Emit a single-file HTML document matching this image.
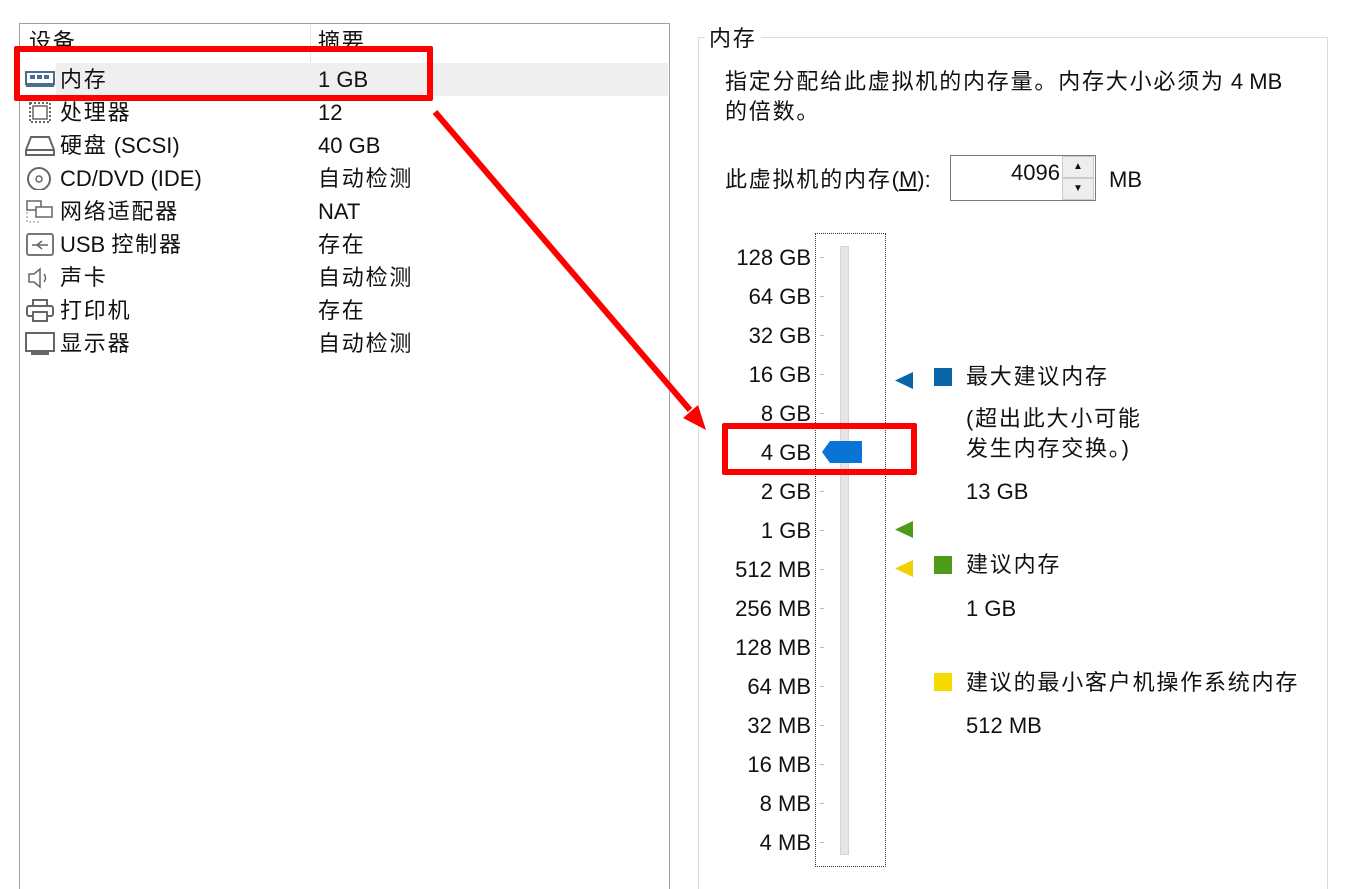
<!DOCTYPE html>
<html style="width:1359px;height:889px;overflow:hidden"><head><meta charset="utf-8"><style>
body{margin:0;width:1359px;height:889px;background:#fff;font-family:"Liberation Sans","Noto Sans CJK SC",sans-serif;font-size:22px;color:#111;position:relative;overflow:hidden}
.a{position:absolute;white-space:nowrap}
.c{letter-spacing:1.8px}
.row{position:absolute;left:20px;width:648px;height:33px;line-height:33px}
.ic{position:absolute;left:5px;top:5px;width:30px;height:23px}
.lab2{position:absolute;left:0;width:811px;text-align:right;line-height:24px}
.tick{position:absolute;left:820px;width:4px;height:1px;background:#bbb}
</style></head><body>
<div class="a" style="left:19px;top:23px;width:649px;height:866px;border:1px solid #a0a0a0;border-bottom:none"></div>
<div class="a" style="left:310px;top:24px;width:1px;height:38px;background:#e5e5e5"></div>
<div class="a c" style="left:29px;top:27px;line-height:30px">设备</div>
<div class="a c" style="left:318px;top:27px;line-height:30px">摘要</div>
<div class="a" style="left:56px;top:63px;width:612px;height:33px;background:#efefef"></div>
<div class="row" style="top:63px"><svg class="ic" viewBox="0 0 30 23"><rect x="1" y="4" width="28" height="12" fill="none" stroke="#4a6f90" stroke-width="2"/><rect x="5" y="7" width="5" height="4" fill="#4a6f90"/><rect x="12" y="7" width="5" height="4" fill="#4a6f90"/><rect x="19" y="7" width="5" height="4" fill="#4a6f90"/><rect x="1" y="16" width="28" height="3" fill="#4a6f90"/></svg><span class="a c" style="left:40px">内存</span><span class="a" style="left:298px">1 GB</span></div>
<div class="row" style="top:96px"><svg class="ic" viewBox="0 0 30 23"><rect x="5" y="2" width="20" height="19" fill="none" stroke="#666" stroke-width="2" stroke-dasharray="2 2"/><rect x="8" y="5" width="14" height="13" fill="none" stroke="#666" stroke-width="1.5"/></svg><span class="a c" style="left:40px">处理器</span><span class="a" style="left:298px">12</span></div>
<div class="row" style="top:129px"><svg class="ic" viewBox="0 0 30 23"><path d="M6 3h18l5 13v5H1v-5z M1 16h28" fill="none" stroke="#666" stroke-width="2"/></svg><span class="a" style="left:40px"><span class="c">硬盘</span> (SCSI)</span><span class="a" style="left:298px">40 GB</span></div>
<div class="row" style="top:162px"><svg class="ic" viewBox="0 0 30 23"><circle cx="14" cy="12" r="11" fill="none" stroke="#666" stroke-width="2"/><circle cx="14" cy="12" r="3" fill="none" stroke="#666" stroke-width="1.5"/></svg><span class="a" style="left:40px">CD/DVD (IDE)</span><span class="a c" style="left:298px">自动检测</span></div>
<div class="row" style="top:195px"><svg class="ic" viewBox="0 0 30 23"><rect x="2" y="1" width="14" height="9" fill="none" stroke="#666" stroke-width="1.5"/><rect x="11" y="7" width="16" height="10" fill="#fff" stroke="#666" stroke-width="1.5"/><path d="M2 12v10h14" stroke="#888" stroke-dasharray="2 2" fill="none"/></svg><span class="a c" style="left:40px">网络适配器</span><span class="a" style="left:298px">NAT</span></div>
<div class="row" style="top:228px"><svg class="ic" viewBox="0 0 30 23"><rect x="2" y="1" width="26" height="21" rx="2" fill="none" stroke="#777" stroke-width="2"/><path d="M7 12h16M12 12l5-4M12 12l5 4" stroke="#666" stroke-width="1.5" fill="none"/></svg><span class="a" style="left:40px">USB <span class="c">控制器</span></span><span class="a c" style="left:298px">存在</span></div>
<div class="row" style="top:261px"><svg class="ic" viewBox="0 0 30 23"><path d="M4 8h5l6-5v18l-6-5H4z" fill="none" stroke="#666" stroke-width="1.5"/><path d="M19 8q3 4 0 8" fill="none" stroke="#666" stroke-width="1.5"/></svg><span class="a c" style="left:40px">声卡</span><span class="a c" style="left:298px">自动检测</span></div>
<div class="row" style="top:294px"><svg class="ic" viewBox="0 0 30 23"><rect x="8" y="1" width="14" height="6" fill="none" stroke="#666" stroke-width="2"/><rect x="2" y="7" width="26" height="10" rx="2" fill="none" stroke="#666" stroke-width="2"/><rect x="8" y="13" width="14" height="9" fill="#fff" stroke="#666" stroke-width="2"/></svg><span class="a c" style="left:40px">打印机</span><span class="a c" style="left:298px">存在</span></div>
<div class="row" style="top:327px"><svg class="ic" viewBox="0 0 30 23"><rect x="1" y="1" width="28" height="18" fill="none" stroke="#666" stroke-width="2"/><rect x="6" y="20" width="18" height="3" fill="#666"/></svg><span class="a c" style="left:40px">显示器</span><span class="a c" style="left:298px">自动检测</span></div>

<div class="a" style="left:698px;top:37px;width:628px;height:852px;border:1px solid #dcdcdc;border-bottom:none"></div>
<div class="a c" style="left:705px;top:25px;background:#fff;padding:0 4px;line-height:28px">内存</div>
<div class="a" style="left:725px;top:67px;line-height:30px"><span class="c">指定分配给此虚拟机的内存量。内存大小必须为</span> 4 MB<br><span class="c">的倍数。</span></div>
<div class="a" style="left:725px;top:165px;line-height:30px"><span class="c">此虚拟机的内存</span>(<u>M</u>):</div>
<div class="a" style="left:950px;top:155px;width:144px;height:44px;border:1px solid #7a7a7a"></div>
<div class="a" style="left:1000px;top:158px;width:60px;text-align:right;line-height:30px">4096</div>
<div class="a" style="left:1062px;top:156px;width:32px;height:22px;background:#eee;border:1px solid #ccc;box-sizing:border-box;text-align:center;font-size:10px;line-height:20px">▲</div>
<div class="a" style="left:1062px;top:178px;width:32px;height:22px;background:#eee;border:1px solid #ccc;box-sizing:border-box;text-align:center;font-size:10px;line-height:20px">▼</div>
<div class="a" style="left:1109px;top:165px;line-height:30px">MB</div>

<div class="a" style="left:815px;top:233px;width:69px;height:632px;border:1px dotted #333"></div>
<div class="a" style="left:840px;top:246px;width:7px;height:607px;background:#e6e6e6;border:1px solid #d5d5d5"></div>
<div class="lab2" style="top:246px">128 GB</div><div class="lab2" style="top:285px">64 GB</div><div class="lab2" style="top:324px">32 GB</div><div class="lab2" style="top:363px">16 GB</div><div class="lab2" style="top:402px">8 GB</div><div class="lab2" style="top:441px">4 GB</div><div class="lab2" style="top:480px">2 GB</div><div class="lab2" style="top:519px">1 GB</div><div class="lab2" style="top:558px">512 MB</div><div class="lab2" style="top:597px">256 MB</div><div class="lab2" style="top:636px">128 MB</div><div class="lab2" style="top:675px">64 MB</div><div class="lab2" style="top:714px">32 MB</div><div class="lab2" style="top:753px">16 MB</div><div class="lab2" style="top:792px">8 MB</div><div class="lab2" style="top:831px">4 MB</div>
<div class="tick" style="top:257px"></div><div class="tick" style="top:296px"></div><div class="tick" style="top:335px"></div><div class="tick" style="top:374px"></div><div class="tick" style="top:413px"></div><div class="tick" style="top:491px"></div><div class="tick" style="top:530px"></div><div class="tick" style="top:569px"></div><div class="tick" style="top:608px"></div><div class="tick" style="top:647px"></div><div class="tick" style="top:686px"></div><div class="tick" style="top:725px"></div><div class="tick" style="top:764px"></div><div class="tick" style="top:803px"></div><div class="tick" style="top:842px"></div>
<svg class="a" style="left:822px;top:440px" width="41" height="24"><path d="M0 12L8 1H40V23H8z" fill="#0a74d6"/></svg>

<svg class="a" style="left:895px;top:371px" width="20" height="19"><path d="M0 9.5L18 1V18z" fill="#0a64a8"/></svg>
<div class="a" style="left:934px;top:368px;width:18px;height:18px;background:#0a64a8"></div>
<div class="a c" style="left:966px;top:362px;line-height:30px">最大建议内存</div>
<div class="a c" style="left:966px;top:404px;line-height:30px">(超出此大小可能<br>发生内存交换。)</div>
<div class="a" style="left:966px;top:477px;line-height:30px">13 GB</div>
<svg class="a" style="left:895px;top:520px" width="20" height="19"><path d="M0 9.5L18 1V18z" fill="#4e9a1a"/></svg>
<svg class="a" style="left:895px;top:559px" width="20" height="19"><path d="M0 9.5L18 1V18z" fill="#f2d000"/></svg>
<div class="a" style="left:934px;top:556px;width:18px;height:18px;background:#4e9a1a"></div>
<div class="a c" style="left:966px;top:550px;line-height:30px">建议内存</div>
<div class="a" style="left:966px;top:594px;line-height:30px">1 GB</div>
<div class="a" style="left:934px;top:673px;width:18px;height:18px;background:#f7da00"></div>
<div class="a c" style="left:966px;top:668px;line-height:30px">建议的最小客户机操作系统内存</div>
<div class="a" style="left:966px;top:711px;line-height:30px">512 MB</div>

<div class="a" style="left:14px;top:46px;width:407px;height:43px;border:6px solid #f00;border-radius:2px"></div>
<div class="a" style="left:722px;top:423px;width:183px;height:40px;border:6px solid #f00;border-radius:2px"></div>
<svg class="a" style="left:0;top:0" width="1359" height="889"><line x1="435" y1="112" x2="690" y2="410" stroke="#f00" stroke-width="6"/><path d="M706 430L683 418L698 405z" fill="#f00"/></svg>
</body></html>
